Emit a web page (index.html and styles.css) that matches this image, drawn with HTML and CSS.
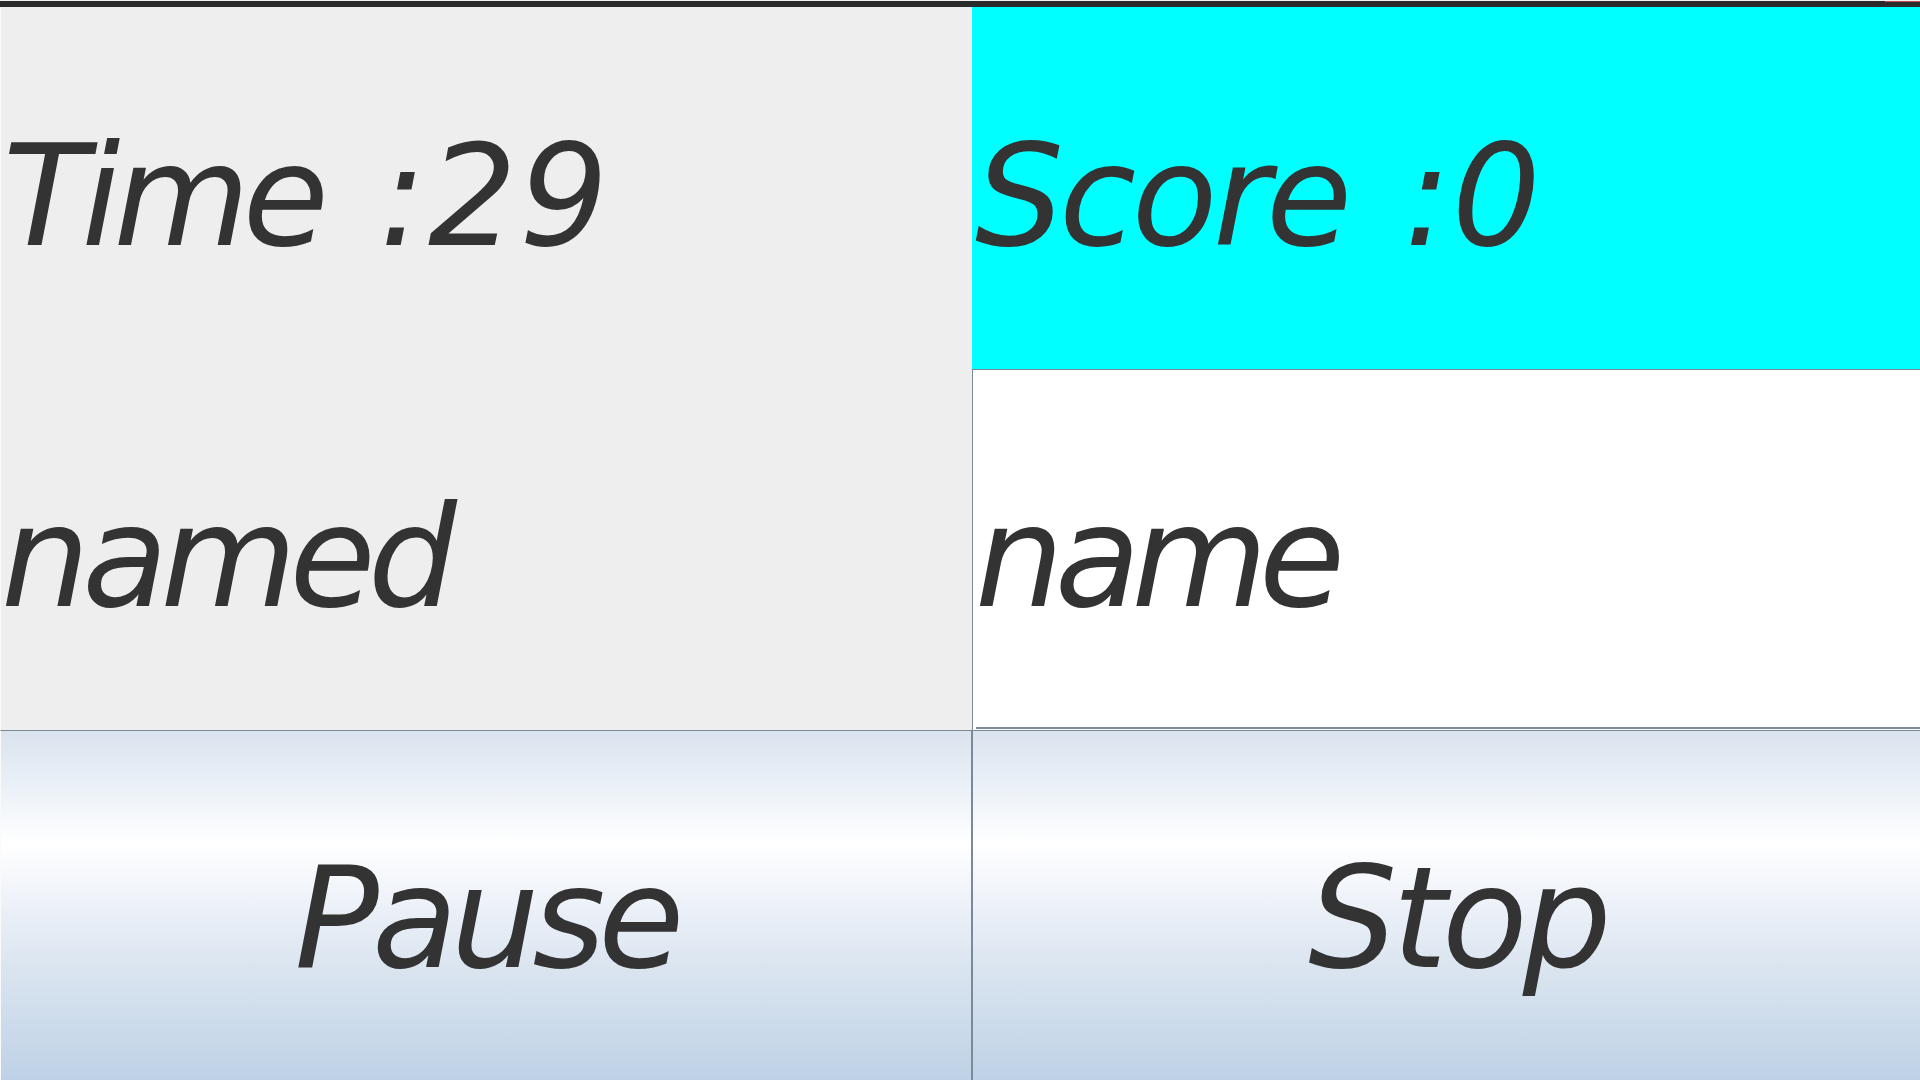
FILE: index.html
```html
<!DOCTYPE html>
<html>
<head>
<meta charset="utf-8">
<title>Game</title>
<link rel="stylesheet" href="styles.css">
</head>
<body>
<div class="frame">
  <div class="titlebar"><span class="titlebar-accent"></span></div>
  <div class="grid">
    <div class="cell label time"><span class="word">Time</span><span class="num">:29</span></div>
    <div class="cell label score"><span class="word score-word">Score</span><span class="num">:0</span></div>
    <div class="cell label named"><span class="word">named</span></div>
    <div class="cell field"><span class="word">name</span></div>
    <div class="cell button pause"><span class="word">Pause</span></div>
    <div class="cell button stop"><span class="word">Stop</span></div>
  </div>
</div>
</body>
</html>
```

FILE: styles.css
```css
html, body {
  margin: 0;
  padding: 0;
  width: 1920px;
  height: 1080px;
  overflow: hidden;
  background: #eeeeee;
}

.frame {
  width: 1920px;
  height: 1080px;
  overflow: hidden;
  border-top: 1px solid #f2f2f2;
  box-sizing: border-box;
}

.titlebar {
  position: relative;
  height: 6px;
  background: #2b2b2b;
}

.titlebar-accent {
  position: absolute;
  right: 0;
  top: -1px;
  width: 35px;
  height: 2px;
  background: #c0504d;
}

.grid {
  display: grid;
  grid-template-columns: 972px 948px;
  grid-template-rows: 362px 361px 362px;
}

.cell {
  display: flex;
  align-items: center;
  box-sizing: border-box;
  font-family: "DejaVu Sans", sans-serif;
  font-style: italic;
  font-size: 140px;
  line-height: 163px;
  color: #333333;
  padding-top: 16px;
  white-space: pre;
  overflow: hidden;
}

.word {
  letter-spacing: -6px;
}

.num {
  margin-left: 54px;
  letter-spacing: 1px;
}

.label {
  background: #eeeeee;
  border-left: 1px solid #fafafa;
}

.time {
  padding-left: 2px;
}

.time .word {
  letter-spacing: -7px;
}

.time .num {
  margin-left: 57px;
  letter-spacing: 2px;
}

.named {
  padding-left: 0;
}

.named .word {
  letter-spacing: -7.5px;
}

.score {
  background: #00ffff;
  border-left: none;
  padding-left: 3px;
}

.score-word {
  letter-spacing: -4.5px;
}

.score .num {
  margin-left: 56px;
}

.field {
  background:
    linear-gradient(#7b8a99, #7b8a99) no-repeat 3px calc(100% - 1px) / calc(100% - 3px) 2px,
    #ffffff;
  border-left: 1px solid #7b8a99;
  border-top: 1px solid #7b8a99;
  padding-left: 2px;
  padding-top: 14px;
}

.field .word {
  letter-spacing: -9px;
}

.button {
  justify-content: center;
  border-top: 1px solid #7b8a99;
  background: linear-gradient(to bottom,
    #dae3ee 0%,
    #eaf0f7 15%,
    #ffffff 31%,
    #eef2f9 47%,
    #dbe5f0 65%,
    #c9d9ea 85%,
    #bbcfe5 100%);
  padding-top: 14px;
}

.pause {
  border-left: 1px solid #fafafa;
  border-right: 1px solid #7b8a99;
}

.pause .word {
  letter-spacing: -7px;
}

.stop {
  border-left: 1px solid #7b8a99;
  padding-left: 22px;
}

.stop .word {
  letter-spacing: -5px;
}
```
